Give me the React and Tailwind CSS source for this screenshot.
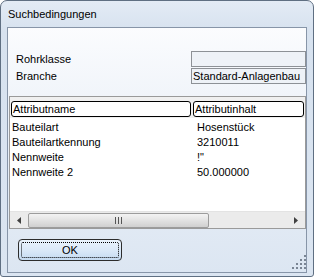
const rows = [
  { name: "Bauteilart", value: "Hosenstück" },
  { name: "Bauteilartkennung", value: "3210011" },
  { name: "Nennweite", value: "!\"" },
  { name: "Nennweite 2", value: "50.000000" },
];

function SizeGrip() {
  const dots = [];
  for (let r = 0; r < 4; r++) {
    for (let c = 3 - r; c < 4; c++) dots.push([c * 4, r * 4]);
  }
  return (
    <svg width="14" height="14" className="absolute bottom-[3px] right-0">
      {dots.map(([x, y]) => (
        <rect key={`${x}-${y}`} x={x} y={y} width="2" height="2" fill="#7a8594" />
      ))}
    </svg>
  );
}

export default function App() {
  return (
    <div className="h-[277px] w-[314px] overflow-hidden bg-white font-['Liberation_Sans',Arial,sans-serif] text-[11px] text-black">
      <div className="flex h-full flex-col rounded-t-[7px] rounded-b-[3px] border border-[#5f6f82] bg-[linear-gradient(180deg,#e3ebf5,#d7e2ef_30px,#dbe5f1)]">
        <div className="flex h-[26px] items-center pl-[7px] text-[11px]">Suchbedingungen</div>

        <div className="relative mx-[6px] mb-[3px] flex flex-1 flex-col overflow-hidden border border-[#8795a8] bg-[linear-gradient(180deg,#fbfcfe,#e9eff7_120px,#dce6f2)]">
          <div className="mt-[23px] flex flex-col gap-[1px]">
            <div className="flex h-[16px] items-center">
              <span className="w-[183px] pl-[8px]">Rohrklasse</span>
              <div className="h-[16px] w-[115px] shrink-0 border border-[#8d9196] bg-[#eef2f7]" />
            </div>
            <div className="flex h-[16px] items-center">
              <span className="w-[183px] pl-[8px]">Branche</span>
              <div className="flex h-[16px] w-[115px] shrink-0 items-center border border-[#8d9196] bg-[#eef2f7] pl-[1px] leading-none">
                Standard-Anlagenbau
              </div>
            </div>
          </div>

          <div className="ml-[1px] mt-[12px] flex h-[133px] w-[297px] shrink-0 flex-col border border-[#9a9a9a] bg-white">
            <div className="flex h-[21px] items-end gap-[2px] bg-[#f0f0f0] px-[1px] pb-[1px]">
              <div className="flex h-[16px] w-[180px] items-center rounded-[3px] border border-black bg-white pl-[1px]">
                Attributname
              </div>
              <div className="flex h-[16px] flex-1 items-center rounded-[3px] border border-black bg-white pl-[1px]">
                Attributinhalt
              </div>
            </div>
            <div className="flex flex-1 flex-col pt-[2px]">
              {rows.map((row) => (
                <div key={row.name} className="flex h-[15px] items-center">
                  <span className="w-[187px] pl-[2px]">{row.name}</span>
                  <span>{row.value}</span>
                </div>
              ))}
            </div>
            <div className="flex h-[17px] items-center border-t border-[#e3e3e3] bg-[#ebebeb]">
              <div className="flex w-[18px] justify-center">
                <svg width="4" height="7">
                  <path d="M4 0 L0 3.5 L4 7 Z" fill="#404040" />
                </svg>
              </div>
              <div className="flex h-[15px] w-[181px] items-center justify-center rounded-[2px] border border-[#9c9c9c] bg-[linear-gradient(180deg,#f3f3f3,#e2e2e2_50%,#d0d0d0)]">
                <svg width="7" height="7">
                  <rect x="0" y="0" width="1" height="7" fill="#555" />
                  <rect x="3" y="0" width="1" height="7" fill="#555" />
                  <rect x="6" y="0" width="1" height="7" fill="#555" />
                </svg>
              </div>
              <div className="flex-1" />
              <div className="flex w-[18px] justify-center">
                <svg width="4" height="7">
                  <path d="M0 0 L4 3.5 L0 7 Z" fill="#404040" />
                </svg>
              </div>
            </div>
          </div>

          <div className="ml-[10px] mt-[10px] flex h-[22px] w-[104px] items-center justify-center rounded-[4px] border border-[#2c2c2c] bg-[linear-gradient(180deg,#eaf3fc,#dbe9f8_50%,#c4daf1)] p-[2px]">
            <div className="flex h-full w-full items-center justify-center rounded-[2px] border border-dotted border-black">
              OK
            </div>
          </div>

          <SizeGrip />
        </div>
      </div>
    </div>
  );
}
